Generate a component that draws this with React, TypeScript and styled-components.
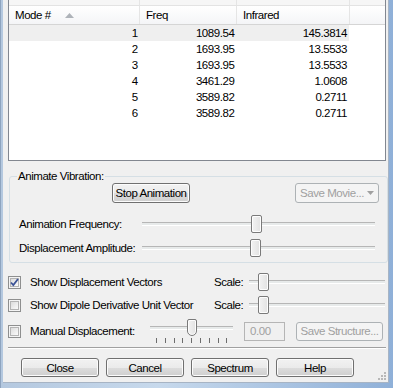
import React from 'react';
import styled, { createGlobalStyle } from 'styled-components';

const GlobalStyle = createGlobalStyle`
  html, body {
    margin: 0;
    padding: 0;
    background: #c9dcef;
  }
  body {
    font-family: "Liberation Sans", Arial, sans-serif;
    font-size: 11.5px;
    letter-spacing: -0.45px;
    color: #000;
  }
`;

const modes = [
  { id: 1, freq: '1089.54', ir: '145.3814' },
  { id: 2, freq: '1693.95', ir: '13.5533' },
  { id: 3, freq: '1693.95', ir: '13.5533' },
  { id: 4, freq: '3461.29', ir: '1.0608' },
  { id: 5, freq: '3589.82', ir: '0.2711' },
  { id: 6, freq: '3589.82', ir: '0.2711' },
];

const Frame = styled.div`
  width: 393px;
  height: 388px;
  overflow: hidden;
  background: linear-gradient(90deg, #b4c8df 0%, #c7d9ec 40%, #8fb0d8 100%);
  border-left: 1px solid #8ea4bf;
  box-sizing: border-box;
`;

const Panel = styled.div`
  width: 386px;
  height: 383px;
  margin-left: 2px;
  background: #f0f0f0;
  border-right: 1px solid #a7b4c4;
  border-bottom: 1px solid #a7b4c4;
  box-sizing: border-box;
  padding: 0 2px 0 5px;
  display: flex;
  flex-direction: column;
  position: relative;
`;

const ListBox = styled.div`
  height: 161px;
  border: 1px solid #828790;
  border-top: none;
  background: #fff;
  box-sizing: border-box;
  display: flex;
  flex-direction: column;
`;

const TopStrip = styled.div`
  height: 5px;
  background: #f6f6f6;
  display: flex;
`;

const Header = styled.div`
  height: 20px;
  display: flex;
  background: linear-gradient(#ffffff, #f4f5f7);
  border-top: 1px solid #e3e3e3;
  border-bottom: 1px solid #d5d5d5;
  box-sizing: border-box;
`;

const HeaderCell = styled.div<{ w: number }>`
  width: ${({ w }) => w}px;
  flex: ${({ w }) => (w ? 'none' : '1')};
  border-right: 1px solid #e5e5e5;
  box-sizing: border-box;
  padding-left: 6px;
  display: flex;
  align-items: center;
  position: relative;
`;

const StripCell = styled.div<{ w: number }>`
  width: ${({ w }) => w}px;
  flex: ${({ w }) => (w ? 'none' : '1')};
  border-right: 1px solid #e5e5e5;
  box-sizing: border-box;
`;

const SortArrow = styled.svg`
  position: absolute;
  left: 56px;
  top: 7px;
`;

const Row = styled.div<{ selected?: boolean }>`
  height: 16px;
  width: 340px;
  display: flex;
  align-items: center;
  background: ${({ selected }) => (selected ? '#efefef' : 'transparent')};
`;

const Cell = styled.div<{ w: number }>`
  width: ${({ w }) => w}px;
  text-align: right;
  padding-right: 2px;
  box-sizing: border-box;
`;

const Group = styled.fieldset`
  margin: 9px 1px 0 1px;
  padding: 0 8px 0 9px;
  height: 93px;
  border: 1px solid #d5dfe5;
  border-radius: 3px;
  box-sizing: border-box;
  display: flex;
  flex-direction: column;
`;

const Legend = styled.legend`
  padding: 0 1px;
  margin-left: -2px;
  line-height: 12px;
`;

const ButtonRow = styled.div`
  display: flex;
  height: 20px;
  margin-top: 1px;
  position: relative;
`;

const Button = styled.button<{ w: number; h?: number; disabled?: boolean }>`
  width: ${({ w }) => w}px;
  height: ${({ h }) => h || 20}px;
  padding: 0;
  font: inherit;
  letter-spacing: inherit;
  border-radius: 3px;
  border: 1px solid ${({ disabled }) => (disabled ? '#adb2b5' : '#707070')};
  color: ${({ disabled }) => (disabled ? '#a0a0a0' : '#000')};
  background: ${({ disabled }) =>
    disabled
      ? '#f4f4f4'
      : 'linear-gradient(#f2f2f2 0%, #ebebeb 50%, #dddddd 51%, #cfcfcf 100%)'};
  box-shadow: inset 0 0 0 1px ${({ disabled }) => (disabled ? 'transparent' : '#fcfcfc')};
  display: flex;
  align-items: center;
  justify-content: center;
  gap: 3px;
  flex: none;
`;

const SliderRow = styled.div`
  display: flex;
  align-items: center;
  height: 18px;
`;

const Label = styled.div<{ w?: number }>`
  width: ${({ w }) => (w ? `${w}px` : 'auto')};
  flex: none;
  white-space: nowrap;
`;

const Track = styled.div<{ w: number }>`
  width: ${({ w }) => w}px;
  height: 18px;
  position: relative;
  flex: none;
  &::before {
    content: '';
    position: absolute;
    left: 0;
    right: 0;
    top: 7px;
    height: 2px;
    background: #e7eaea;
    border-top: 1px solid #b6b6b6;
    border-bottom: 1px solid #ffffff;
  }
`;

const Thumb = styled.div`
  position: absolute;
  top: 0;
  width: 11px;
  height: 18px;
  margin-left: -5px;
  box-sizing: border-box;
  border: 1px solid #7a7a7a;
  border-radius: 2px;
  background: linear-gradient(90deg, #f3f3f3, #e2e2e2);
  box-shadow: inset 0 0 0 1px #fdfdfd;
`;

const CheckRow = styled.div`
  display: flex;
  align-items: center;
  height: 18px;
`;

const Box = styled.div`
  width: 13px;
  height: 13px;
  box-sizing: border-box;
  border: 1px solid #8e8f8f;
  background: #f4f4f4;
  flex: none;
  margin-right: 9px;
  display: flex;
  align-items: center;
  justify-content: center;
  &::after {
    content: '';
    width: 9px;
    height: 9px;
    box-sizing: border-box;
    border: 1px solid #b4b4b4;
    background: linear-gradient(135deg, #dcdcdc, #fbfbfb);
  }
`;

const Check = styled.svg`
  position: absolute;
`;

const BoxWrap = styled.div`
  position: relative;
  display: flex;
  align-items: center;
`;

const TextBox = styled.div`
  width: 41px;
  height: 19px;
  box-sizing: border-box;
  border: 1px solid #b5b5b5;
  background: #f0f0f0;
  color: #a0a0a0;
  padding-left: 5px;
  display: flex;
  align-items: center;
`;

const Ticks = styled.div`
  position: absolute;
  left: 6px;
  top: 19px;
  display: flex;
  gap: 7.8px;
`;

const Tick = styled.div`
  width: 1px;
  height: 5px;
  background: #6d6d6d;
`;

const Separator = styled.div`
  height: 1px;
  background: #a0a0a0;
  border-bottom: 1px solid #fff;
  margin-top: 7px;
`;

const Footer = styled.div`
  display: flex;
  gap: 7px;
  padding-left: 13px;
  margin-top: 9px;
`;

const Grip = styled.svg`
  position: absolute;
  right: 2px;
  bottom: 2px;
`;

const Slider: React.FC<{ w: number; value: number }> = ({ w, value }) => (
  <Track w={w}>
    <Thumb style={{ left: `${value * 100}%` }} />
  </Track>
);

const CheckBox: React.FC<{ checked?: boolean }> = ({ checked }) => (
  <BoxWrap>
    <Box />
    {checked && (
      <Check width="13" height="13" viewBox="0 0 13 13">
        <path d="M3 6.5 L5.3 9 L10 3" fill="none" stroke="#3c5396" strokeWidth="1.8" />
      </Check>
    )}
  </BoxWrap>
);

const App: React.FC = () => {
  const cols = [131, 97, 113];
  return (
    <>
      <GlobalStyle />
      <Frame>
        <Panel>
          <ListBox>
            <TopStrip>
              <StripCell w={131} />
              <StripCell w={97} />
              <StripCell w={113} />
              <StripCell w={0} style={{ borderRight: 'none' }} />
            </TopStrip>
            <Header>
              <HeaderCell w={131}>
                Mode #
                <SortArrow width="9" height="5" viewBox="0 0 9 5">
                  <path d="M4.5 0 L9 5 L0 5 Z" fill="#aeb3b9" />
                </SortArrow>
              </HeaderCell>
              <HeaderCell w={97}>Freq</HeaderCell>
              <HeaderCell w={113}>Infrared</HeaderCell>
              <HeaderCell w={0} style={{ borderRight: 'none' }} />
            </Header>
            {modes.map((m, i) => (
              <Row key={m.id} selected={i === 0}>
                <Cell w={cols[0]}>{m.id}</Cell>
                <Cell w={cols[1]}>{m.freq}</Cell>
                <Cell w={cols[2]}>{m.ir}</Cell>
              </Row>
            ))}
          </ListBox>

          <Group>
            <Legend>Animate Vibration:</Legend>
            <ButtonRow>
              <Button w={78} style={{ marginLeft: 93 }}>Stop Animation</Button>
              <Button w={84} disabled style={{ marginLeft: 105 }}>
                Save Movie...
                <svg width="7" height="4" viewBox="0 0 7 4">
                  <path d="M0 0 L7 0 L3.5 4 Z" fill="#a0a0a0" />
                </svg>
              </Button>
            </ButtonRow>
            <SliderRow style={{ marginTop: 12 }}>
              <Label w={123}>Animation Frequency:</Label>
              <Slider w={233} value={0.49} />
            </SliderRow>
            <SliderRow style={{ marginTop: 6 }}>
              <Label w={123}>Displacement Amplitude:</Label>
              <Slider w={233} value={0.485} />
            </SliderRow>
          </Group>

          <CheckRow style={{ marginTop: 10 }}>
            <CheckBox checked />
            <Label w={184}>Show Displacement Vectors</Label>
            <Label w={35}>Scale:</Label>
            <Slider w={136} value={0.1} />
          </CheckRow>
          <CheckRow style={{ marginTop: 5 }}>
            <CheckBox />
            <Label w={184}>Show Dipole Derivative Unit Vector</Label>
            <Label w={35}>Scale:</Label>
            <Slider w={136} value={0.1} />
          </CheckRow>
          <CheckRow style={{ marginTop: 8 }}>
            <CheckBox />
            <Label w={120}>Manual Displacement:</Label>
            <Track w={83} style={{ top: -3 }}>
              <Thumb style={{ left: '50%', width: 10, height: 17, borderRadius: '2px 2px 5px 5px' }} />
              <Ticks>
                {Array.from({ length: 9 }).map((_, i) => (
                  <Tick key={i} />
                ))}
              </Ticks>
            </Track>
            <TextBox style={{ marginLeft: 11 }}>0.00</TextBox>
            <Button w={87} h={19} disabled style={{ marginLeft: 11 }}>
              Save Structure...
            </Button>
          </CheckRow>

          <Separator />

          <Footer>
            <Button w={78} h={19}>Close</Button>
            <Button w={78} h={19}>Cancel</Button>
            <Button w={78} h={19}>Spectrum</Button>
            <Button w={78} h={19}>Help</Button>
          </Footer>

          <Grip width="10" height="10" viewBox="0 0 10 10">
            {[
              [8, 2],
              [8, 5],
              [5, 5],
              [8, 8],
              [5, 8],
              [2, 8],
            ].map(([x, y], i) => (
              <rect key={i} x={x} y={y} width="2" height="2" fill="#b8b8b8" />
            ))}
          </Grip>
        </Panel>
      </Frame>
    </>
  );
};

export default App;
